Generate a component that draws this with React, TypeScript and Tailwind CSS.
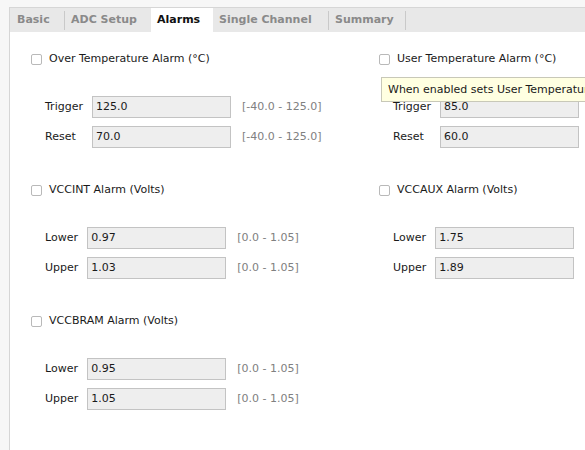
import React from "react";

type Field = { label: string; value: string; range?: string };
type Group = { title: string; fields: Field[] };

const left: Group[] = [
  {
    title: "Over Temperature Alarm (°C)",
    fields: [
      { label: "Trigger", value: "125.0", range: "[-40.0 - 125.0]" },
      { label: "Reset", value: "70.0", range: "[-40.0 - 125.0]" },
    ],
  },
  {
    title: "VCCINT Alarm (Volts)",
    fields: [
      { label: "Lower", value: "0.97", range: "[0.0 - 1.05]" },
      { label: "Upper", value: "1.03", range: "[0.0 - 1.05]" },
    ],
  },
  {
    title: "VCCBRAM Alarm (Volts)",
    fields: [
      { label: "Lower", value: "0.95", range: "[0.0 - 1.05]" },
      { label: "Upper", value: "1.05", range: "[0.0 - 1.05]" },
    ],
  },
];

const right: Group[] = [
  {
    title: "User Temperature Alarm (°C)",
    fields: [
      { label: "Trigger", value: "85.0" },
      { label: "Reset", value: "60.0" },
    ],
  },
  {
    title: "VCCAUX Alarm (Volts)",
    fields: [
      { label: "Lower", value: "1.75" },
      { label: "Upper", value: "1.89" },
    ],
  },
];

function Sep() {
  return <div className="w-px h-[19px] bg-[#c9c9c9] self-center shrink-0" />;
}

function Tabs() {
  return (
    <div className="flex h-[24px] bg-[#e8e8e8] text-[11px] font-bold text-[#8a8a8a] leading-[24px]">
      <div className="w-[54px] pl-[7px]">Basic</div>
      <Sep />
      <div className="w-[86px] pl-[6px]">ADC Setup</div>
      <div className="w-[62px] pl-[6px] bg-white text-[#111]">Alarms</div>
      <div className="w-[115px] pl-[6px]">Single Channel</div>
      <Sep />
      <div className="w-[76px] pl-[6px]">Summary</div>
      <Sep />
    </div>
  );
}

function AlarmGroup({ group }: { group: Group }) {
  return (
    <div>
      <div className="flex items-center h-[13px] gap-[7px]">
        <div className="w-[11px] h-[11px] border border-[#b9b9b9] rounded-[2px] bg-white" />
        <span className="text-[#1a1a1a]">{group.title}</span>
      </div>
      <div className="mt-[30px] pl-[14px] grid grid-cols-[auto_139px_auto] justify-start gap-y-[8px] items-center">
        {group.fields.map(f => (
          <React.Fragment key={f.label}>
            <span className="pr-[9px] text-[#1a1a1a]">{f.label}</span>
            <div className="h-[22px] border border-[#c3c3c3] bg-[#eeeeee] pl-[3px] leading-[20px] text-[#1a1a1a]">{f.value}</div>
            <span className="pl-[11px] text-[#808080]">{f.range ?? ""}</span>
          </React.Fragment>
        ))}
      </div>
    </div>
  );
}

export default function App() {
  return (
    <div className="w-[585px] h-[450px] overflow-hidden bg-[#f7f7f7] pt-[7px] pl-[9px] font-['DejaVu_Sans',sans-serif] text-[11px]">
      <div className="h-full border-l border-t border-[#d6d6d6] bg-white">
        <Tabs />
        <div className="relative pl-[21px] pt-[21px] grid grid-cols-[348px_1fr]">
          <div className="flex flex-col gap-[36px]">
            {left.map(g => <AlarmGroup key={g.title} group={g} />)}
          </div>
          <div className="flex flex-col gap-[36px]">
            {right.map(g => <AlarmGroup key={g.title} group={g} />)}
          </div>
          <div className="absolute left-[371px] top-[45px] h-[25px] pl-[6px] pr-[8px] bg-[#ffffe1] border border-[#c8c8b8] whitespace-nowrap leading-[23px] text-[#1a1a1a]">
            When enabled sets User Temperature Alarm
          </div>
        </div>
      </div>
    </div>
  );
}
